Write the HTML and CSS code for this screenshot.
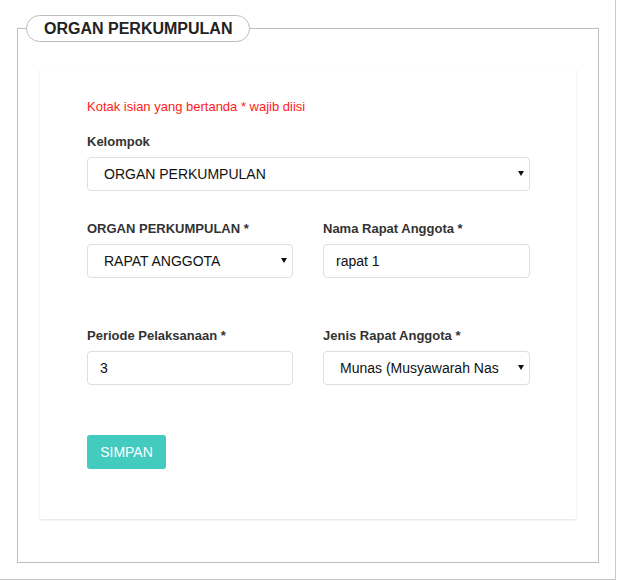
FILE: index.html
```html
<!DOCTYPE html>
<html>
<head>
<meta charset="utf-8">
<link rel="stylesheet" href="styles.css">
</head>
<body>
<div class="page">
  <fieldset class="box">
    <legend class="box-title">ORGAN PERKUMPULAN</legend>
    <div class="card">
      <p class="note">Kotak isian yang bertanda * wajib diisi</p>
      <div class="group">
        <label class="label">Kelompok</label>
        <div class="select-wrap">
          <select class="control select"><option>ORGAN PERKUMPULAN</option></select>
        </div>
      </div>
      <div class="row row-2">
        <div class="group">
          <label class="label">ORGAN PERKUMPULAN *</label>
          <div class="select-wrap">
            <select class="control select"><option>RAPAT ANGGOTA</option></select>
          </div>
        </div>
        <div class="group">
          <label class="label">Nama Rapat Anggota *</label>
          <input class="control" type="text" value="rapat 1">
        </div>
      </div>
      <div class="row row-3">
        <div class="group">
          <label class="label">Periode Pelaksanaan *</label>
          <input class="control" type="text" value="3">
        </div>
        <div class="group">
          <label class="label">Jenis Rapat Anggota *</label>
          <div class="select-wrap">
            <select class="control select"><option>Munas (Musyawarah Nasional)</option></select>
          </div>
        </div>
      </div>
      <button class="btn" type="button">SIMPAN</button>
    </div>
  </fieldset>
</div>
</body>
</html>
```
FILE: styles.css
```css
html, body {
  margin: 0;
  padding: 0;
  background: #fff;
}
body {
  font-family: "Liberation Sans", Arial, sans-serif;
  color: #333;
}
.page {
  width: 616px;
  height: 580px;
  box-sizing: border-box;
  border-right: 1px solid #c8c8c8;
  border-bottom: 1px solid #c8c8c8;
  padding: 15px 16px 0 17px;
}
.box {
  margin: 0;
  padding: 0 8px 43px;
  border: 1px solid #bdbdbd;
  min-width: 0;
}
.box-title {
  margin: 0;
  padding: 0 17px;
  border: 1px solid #bdbdbd;
  border-radius: 14px;
  line-height: 25px;
  font-size: 16px;
  font-weight: bold;
  color: #222;
  background: #fff;
}
.card {
  margin: 27px 14px 0;
  padding: 29px 46px 50px 47px;
  background: #fff;
  box-shadow: 0 1px 2px rgba(0, 0, 0, 0.13);
}
.note {
  margin: 0 0 17px;
  font-size: 13px;
  line-height: 18px;
  color: #ff1a1a;
}
.label {
  display: block;
  font-size: 13px;
  line-height: 18px;
  font-weight: bold;
  color: #333;
  margin-bottom: 6px;
}
.row {
  display: grid;
  grid-template-columns: 206px 207px;
  column-gap: 30px;
}
.row-2 {
  margin-top: 29px;
}
.row-3 {
  margin-top: 49px;
}
.control {
  display: block;
  width: 100%;
  height: 34px;
  box-sizing: border-box;
  border: 1px solid #dedede;
  border-radius: 4px;
  background: #fff;
  font-family: "Liberation Sans", Arial, sans-serif;
  font-size: 14px;
  color: #111;
  padding: 0 12px;
  margin: 0;
  outline: none;
}
.select {
  -webkit-appearance: none;
  appearance: none;
  padding: 0 30px 0 16px;
}
.select-wrap {
  position: relative;
}
.select-wrap::after {
  content: "";
  position: absolute;
  right: 6px;
  top: 14px;
  width: 0;
  height: 0;
  border-top: 5px solid #111;
  border-left: 3.5px solid transparent;
  border-right: 3.5px solid transparent;
  pointer-events: none;
}
.btn {
  display: block;
  margin-top: 50px;
  width: 79px;
  height: 34px;
  border: none;
  border-radius: 3px;
  background: #43cbc0;
  color: #fff;
  font-family: "Liberation Sans", Arial, sans-serif;
  font-size: 14px;
  padding: 0;
}
```
